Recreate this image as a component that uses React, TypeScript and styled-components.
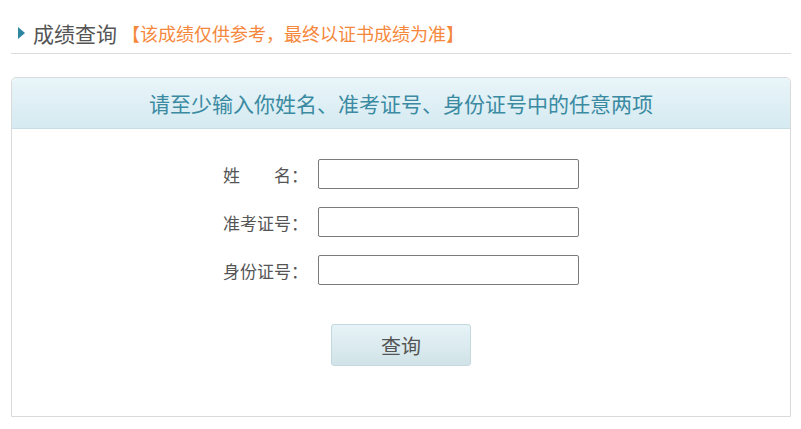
import React from 'react';
import styled, { createGlobalStyle } from 'styled-components';

// 成绩查询页

const GlobalStyle = createGlobalStyle`
  html, body {
    margin: 0;
    padding: 0;
    background: #fff;
  }
  body {
    font-family: "Microsoft YaHei", "Noto Sans CJK SC", "Noto Sans", sans-serif;
  }
`;

const fields = [
  { label: '姓　　名：', name: 'xm' },
  { label: '准考证号：', name: 'zkzh' },
  { label: '身份证号：', name: 'sfzh' },
];

const App = () => {
  return (
    <Page>
      <GlobalStyle />
      <TitleBar>
        <Arrow />
        <Title>成绩查询</Title>
        <Notice>【该成绩仅供参考，最终以证书成绩为准】</Notice>
      </TitleBar>

      <Panel>
        <PanelHead>请至少输入你姓名、准考证号、身份证号中的任意两项</PanelHead>
        <PanelBody>
          {fields.map((f) => (
            <Row key={f.name}>
              <Label>{f.label}</Label>
              <Input type="text" name={f.name} />
            </Row>
          ))}
          <ButtonRow>
            <SearchButton type="button">查询</SearchButton>
          </ButtonRow>
        </PanelBody>
      </Panel>
    </Page>
  );
};

export default App;

const Page = styled.div`
  width: 780px;
  padding: 0 10px 0 11px;
`;

const TitleBar = styled.div`
  display: flex;
  align-items: center;
  height: 54px;
  padding: 13px 0 0 7px;
  box-sizing: border-box;
  border-bottom: 1px solid #dcdcdc;
`;

const Arrow = styled.span`
  width: 0;
  height: 0;
  border-top: 6px solid transparent;
  border-bottom: 6px solid transparent;
  border-left: 7px solid #2e86a0;
  margin-right: 8px;
`;

const Title = styled.span`
  font-size: 21px;
  color: #555;
  margin-right: 5px;
`;

const Notice = styled.span`
  font-size: 18px;
  color: #f5883c;
`;

const Panel = styled.div`
  margin-top: 23px;
  border: 1px solid #dadada;
  border-radius: 5px 5px 0 0;
  height: 340px;
  box-sizing: border-box;
`;

const PanelHead = styled.div`
  height: 50px;
  line-height: 50px;
  text-align: center;
  font-size: 21px;
  color: #3a8aa2;
  background: linear-gradient(to bottom, #e9f5f9, #d5eaf1);
  border-bottom: 1px solid #c9dde4;
  border-radius: 5px 5px 0 0;
`;

const PanelBody = styled.div`
  padding-top: 30px;
  display: flex;
  flex-direction: column;
  align-items: center;
  gap: 18px;
`;

const Row = styled.div`
  display: flex;
  align-items: center;
`;

const Label = styled.span`
  width: 85px;
  margin-right: 10px;
  font-size: 17px;
  color: #555;
  white-space: nowrap;
`;

const Input = styled.input`
  width: 261px;
  height: 30px;
  box-sizing: border-box;
  border: 1px solid #7a7a7a;
  border-radius: 2px;
  outline: none;
  padding: 0 4px;
  font-size: 14px;
`;

const ButtonRow = styled.div`
  display: flex;
  justify-content: center;
  margin-top: 21px;
`;

const SearchButton = styled.button`
  width: 140px;
  height: 42px;
  border: 1px solid #c3d8df;
  border-radius: 3px;
  background: linear-gradient(to bottom, #e6f3f7, #d1e3e8);
  font-family: inherit;
  font-size: 20px;
  color: #555;
  cursor: pointer;
`;
